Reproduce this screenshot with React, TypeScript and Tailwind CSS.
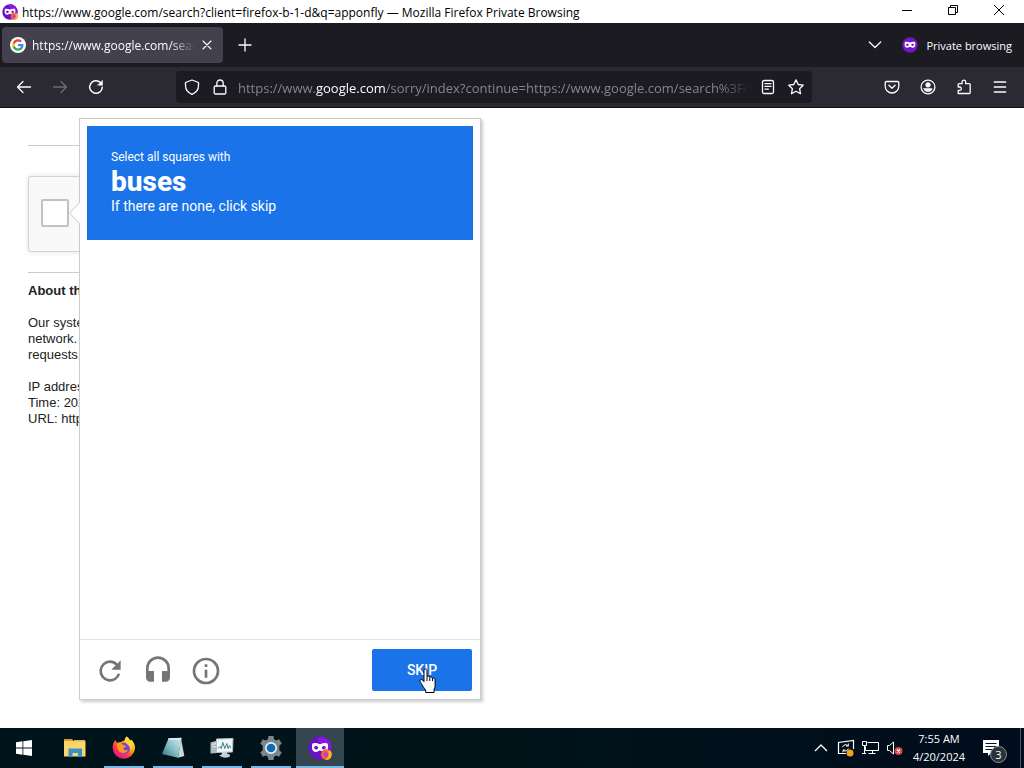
import React from "react";

const UI = "font-['Open_Sans','Noto_Sans',sans-serif]";

function MaskGlyph() {
  return (
    <g fill="#fff">
      <path
        d="M4 9.200c0-1.500.9-2.200 2.400-2.200 2 0 3.800.3 5.600 1.200C13.800 7.300 15.600 7 17.600 7c1.500 0 2.400.7 2.400 2.200v2.300c0 2.800-1.500 4.500-3.900 4.500-1.900 0-2.800-1.500-4.100-1.500S9.800 16 7.900 16C5.500 16 4 14.300 4 11.500zM6.200 11.500c0 1.300.8 2 1.900 2s2-.7 2-1.800-1-1.700-2.100-1.700-1.800.5-1.800 1.500zm7.700.2c0 1.100.9 1.800 2 1.800s1.900-.7 1.900-2c0-1-.7-1.500-1.800-1.500s-2.100.6-2.100 1.700z"
        fillRule="evenodd"
      />
    </g>
  );
}

function PrivateBadge({ className, fox }: { className: string; fox?: boolean }) {
  return (
    <svg viewBox="0 0 24 24" className={className} aria-hidden="true">
      <circle cx="12" cy="12" r="11.500" fill={fox ? "#6a10c8" : "#7316c4"} />
      {fox && <path d="M12 .5a11.500 11.500 0 0 1 11.500 11.500l-5 4L9 3z" fill="#8a17e0" />}
      <MaskGlyph />
      {fox && (
        <g>
          <circle cx="18.300" cy="18.500" r="5.300" fill="#ff5a36" />
          <path d="M18.300 13.200c1.700.6 1.500 1.700 3 2.100.4-.6.300-1.200.100-1.700 2.600 2.200 3.100 6.200 1 8.600-1.500 1.500-3.500 2-5.500 1.400 4-1.500 5.500-6 1.400-10.400z" fill="#ffb52e" />
          <circle cx="18" cy="18.700" r="2.200" fill="#a546dc" />
        </g>
      )}
    </svg>
  );
}

function GoogleIcon() {
  return (
    <svg viewBox="0 0 24 24" className="size-4 shrink-0" aria-hidden="true">
      <circle cx="12" cy="12" r="12" fill="#fff" />
      <g transform="translate(2.600 2.600) scale(.78)">
        <path fill="#4285F4" d="M22.560 12.250c0-.78-.07-1.530-.2-2.250H12v4.260h5.920a5.060 5.060 0 0 1-2.200 3.320v2.770h3.570c2.080-1.920 3.270-4.740 3.270-8.100z" />
        <path fill="#34A853" d="M12 23c2.970 0 5.460-.98 7.280-2.660l-3.570-2.770c-.98.66-2.230 1.060-3.710 1.060-2.860 0-5.290-1.930-6.160-4.530H2.180v2.840A11 11 0 0 0 12 23z" />
        <path fill="#FBBC05" d="M5.840 14.090a6.600 6.600 0 0 1 0-4.180V7.070H2.180a11 11 0 0 0 0 9.860l3.660-2.840z" />
        <path fill="#EA4335" d="M12 5.380c1.620 0 3.060.56 4.210 1.640l3.150-3.150A11 11 0 0 0 2.180 7.070l3.660 2.840C6.710 7.310 9.140 5.380 12 5.380z" />
      </g>
    </svg>
  );
}

type IconProps = { children: React.ReactNode; className?: string };

function Line({ children, className = "size-4" }: IconProps) {
  return (
    <svg
      viewBox="0 0 16 16"
      className={className}
      fill="none"
      stroke="currentColor"
      strokeWidth="1.300"
      strokeLinecap="round"
      strokeLinejoin="round"
      aria-hidden="true"
    >
      {children}
    </svg>
  );
}

function BarButton({ label, children, className = "" }: { label: string; children: React.ReactNode; className?: string }) {
  return (
    <button type="button" aria-label={label} className={`flex shrink-0 items-center justify-center ${className}`}>
      {children}
    </button>
  );
}

function TitleBar() {
  return (
    <header className="flex h-[23px] shrink-0 items-center bg-white text-black">
      <PrivateBadge className="ml-0.5 size-4 shrink-0" fox />
      <h1 className="ml-1 grow truncate pt-0.5 text-[12px] leading-4">
        https://www.google.com/search?client=firefox-b-1-d&amp;q=apponfly — Mozilla Firefox Private Browsing
      </h1>
      <div className="flex shrink-0 pb-1 pr-0.5">
        <BarButton label="Minimize" className="w-[46px]">
          <svg viewBox="0 0 12 12" className="size-3" stroke="#000" aria-hidden="true"><path d="M1 6.500h10" /></svg>
        </BarButton>
        <BarButton label="Restore" className="w-[46px]">
          <svg viewBox="0 0 12 12" className="size-3" fill="none" stroke="#000" aria-hidden="true"><path d="M1.500 3.500h7v7h-7zM3.500 3.500v-2h7v7h-2" /></svg>
        </BarButton>
        <BarButton label="Close" className="w-[46px]">
          <svg viewBox="0 0 12 12" className="size-3" stroke="#000" aria-hidden="true"><path d="M1 1l10 10M11 1L1 11" /></svg>
        </BarButton>
      </div>
    </header>
  );
}

function TabStrip() {
  return (
    <div className="flex h-11 shrink-0 items-center bg-[#1c1b22] pl-0.5 text-[#fbfbfe]">
      <div className="flex h-9 w-[221px] shrink-0 items-center rounded bg-[#42414d] pl-2 pr-2">
        <GoogleIcon />
        <span className="ml-1.5 mr-1 w-0 grow overflow-hidden whitespace-nowrap pt-0.5 text-[12px] leading-4 [mask-image:linear-gradient(to_right,#000_85%,transparent)]">
          https://www.google.com/search?client=firefox-b-1-d
        </span>
        <BarButton label="Close tab" className="size-4">
          <Line><path d="M4 4l8 8M12 4l-8 8" strokeWidth="1.100" /></Line>
        </BarButton>
      </div>
      <BarButton label="New tab" className="ml-3.5 size-4">
        <Line><path d="M2 8h12M8 2v12" /></Line>
      </BarButton>
      <div className="grow" />
      <BarButton label="List all tabs" className="size-4">
        <Line><path d="M2.300 5L8 10.500 13.700 5" /></Line>
      </BarButton>
      <PrivateBadge className="ml-[19px] size-4 shrink-0" />
      <span className="ml-2 mr-3 whitespace-nowrap pt-0.5 text-[11px] leading-4">Private browsing</span>
    </div>
  );
}

function NavBar() {
  return (
    <div className="flex h-[41px] shrink-0 items-center border-b border-[#0f0e14] bg-[#2b2a33] pl-4 pr-4 text-[#fbfbfe]">
      <div className="flex gap-5">
        <BarButton label="Back"><Line><path d="M14.500 8H1.500M7 2.500L1.500 8 7 13.500" /></Line></BarButton>
        <BarButton label="Forward" className="text-[#6d6c75]"><Line><path d="M1.500 8h13M9 2.500L14.500 8 9 13.500" /></Line></BarButton>
        <BarButton label="Reload">
          <Line><path d="M14.300 8.300A6.300 6.300 0 1 1 12.400 3.500" strokeWidth="1.500" /><path d="M14.500 1.500v4.700H9.800z" fill="currentColor" strokeWidth=".5" /></Line>
        </BarButton>
      </div>
      <div className="ml-[72px] flex h-8 w-0 max-w-[636px] grow items-center rounded bg-[#1c1b22] px-2">
        <BarButton label="Tracking protection"><Line><path d="M8 1L14.500 3.500v3.300c0 4-2.800 7-6.500 8.500C4.300 13.800 1.500 10.800 1.500 6.800V3.500z" /></Line></BarButton>
        <BarButton label="Site security" className="ml-3"><Line><rect x="2.200" y="7" width="11.600" height="8" rx="1.300" /><path d="M4.800 7V4.200a3.200 3.200 0 0 1 6.400 0V7" /></Line></BarButton>
        <div
          role="textbox"
          aria-label="Address"
          className="ml-2.5 mr-2.5 w-0 grow overflow-hidden whitespace-nowrap pt-0.5 text-[13px] leading-5 text-[#85848c] [mask-image:linear-gradient(to_right,#000_94%,transparent)]"
        >
          https://www.<span className="text-[#fbfbfe]">google.com</span>/sorry/index?continue=https://www.google.com/search%3Fclient
        </div>
        <BarButton label="Reader view"><Line><rect x="2.500" y="1.500" width="11" height="13" rx="1.500" /><path d="M5 4.700h6M5 7.400h6M5 10.100h3.500" /></Line></BarButton>
        <BarButton label="Bookmark" className="ml-3"><Line><path d="M8 .9l2.200 4.600 5 .7-3.600 3.500.9 5L8 12.300l-4.500 2.400.9-5L.8 6.200l5-.7z" /></Line></BarButton>
      </div>
      <div className="ml-auto flex gap-5">
        <BarButton label="Pocket"><Line><path d="M2.300 2.500h11.400c.7 0 1.100.5 1.100 1.100v3.600a6.800 6.800 0 0 1-13.600 0V3.600c0-.6.400-1.100 1.100-1.100z" /><path d="M4.900 6.300L8 9.200l3.100-2.900" /></Line></BarButton>
        <BarButton label="Account"><Line><circle cx="8" cy="8" r="6.900" /><circle cx="8" cy="5.900" r="2.400" fill="currentColor" strokeWidth=".5" /><path d="M3.900 9.500h8.200c0 2-2 3.300-4.100 3.300s-4.100-1.300-4.100-3.300z" fill="currentColor" strokeWidth=".5" /></Line></BarButton>
        <BarButton label="Extensions"><Line><path d="M2.200 14.500V11.300h1.500a1.650 1.650 0 0 0 0-3.300H2.200V5.600c0-.5.400-.9.900-.9h3V3a1.800 1.800 0 0 1 3.600 0v1.700h3.600c.5 0 .9.400.9.900v8c0 .5-.4.900-.9.900z" /></Line></BarButton>
        <BarButton label="Application menu"><Line><path d="M2.300 3h11.400M2.300 8h11.400M2.300 13h11.400" /></Line></BarButton>
      </div>
    </div>
  );
}

function SorryPage() {
  return (
    <div className="w-[428px] pl-7 pt-[37px] font-['Liberation_Sans',Arial,sans-serif] text-[13px] leading-4 text-[#222]">
      <hr className="border-[#ccc]" />
      <div className="mt-[30px] flex h-[76px] w-[304px] items-center rounded-[3px] border border-[#d3d3d3] bg-[#f9f9f9] pb-0.5 pl-3 shadow-[0_0_4px_1px_rgba(0,0,0,0.08)]">
        <input
          type="checkbox"
          aria-label="I'm not a robot"
          className="size-7 appearance-none rounded-xs border-2 border-[#c1c1c1] bg-white"
        />
      </div>
      <hr className="mt-5 border-[#ccc]" />
      <h2 className="mt-2.5 font-bold">About this page</h2>
      <p className="mt-4">
        Our systems have detected unusual traffic from your computer
        <br />
        network. This page checks to see if it's really you sending the
        <br />
        requests, and not a robot.
      </p>
      <p className="mt-4">
        IP address: 10.0.0.1
        <br />
        Time: 2024-04-20T07:55:00Z
        <br />
        URL: https://www.google.com/search
      </p>
    </div>
  );
}

function Challenge() {
  return (
    <section
      aria-label="Image challenge"
      className="absolute bottom-7 left-[79px] top-2.5 flex w-[402px] flex-col border border-[#ccc] bg-white font-[Roboto,sans-serif] shadow-[2px_2px_3px_rgba(0,0,0,0.2)]"
    >
      <svg viewBox="0 0 11 22" className="absolute -left-[11px] top-[83px] h-[22px] w-[11px]" aria-hidden="true">
        <path d="M11 0L.7 11 11 22" fill="#fff" stroke="#ccc" />
      </svg>
      <div className="m-[7px] mb-0 h-[114px] bg-[#1a73e8] px-6 pt-[23px] text-white">
        <div className="text-[12px] leading-4">Select all squares with</div>
        <strong className="block text-[28px] font-extrabold leading-[33px]">buses</strong>
        <div className="text-[14px] leading-4">If there are none, click skip</div>
      </div>
      <div className="grow" />
      <footer className="flex h-[60px] items-center justify-between border-t border-[#dfdfdf] pl-3.5 pr-2">
        <div className="flex gap-4 pt-0.5 text-[#757575]">
          <BarButton label="Get a new challenge">
            <svg viewBox="0 0 24 24" className="size-8" fill="currentColor" aria-hidden="true"><path d="M17.650 6.350A7.958 7.958 0 0 0 12 4a8 8 0 1 0 7.730 10h-2.080A5.990 5.990 0 0 1 12 18a6 6 0 1 1 0-12c1.660 0 3.140.69 4.220 1.780L13 11h7V4z" /></svg>
          </BarButton>
          <BarButton label="Get an audio challenge">
            <svg viewBox="0 0 24 24" className="size-8" fill="currentColor" aria-hidden="true"><path d="M12 1a9 9 0 0 0-9 9v7c0 1.660 1.340 3 3 3h3v-8H5v-2a7 7 0 0 1 14 0v2h-4v8h3c1.660 0 3-1.340 3-3v-7a9 9 0 0 0-9-9z" /></svg>
          </BarButton>
          <BarButton label="Help">
            <svg viewBox="0 0 24 24" className="size-8" fill="currentColor" aria-hidden="true"><path d="M11 17h2v-6h-2zm1-15a10 10 0 1 0 0 20 10 10 0 0 0 0-20zm0 18a8 8 0 1 1 0-16 8 8 0 0 1 0 16zM11 9h2V7h-2z" /></svg>
          </BarButton>
        </div>
        <button type="button" className="relative h-[42px] w-[100px] rounded-xs bg-[#1a73e8] pt-0.5 text-[14px] font-medium text-white">
          SKIP
          <svg viewBox="0 0 18 26" className="absolute left-[47px] top-[19px] h-[26px] w-[18px]" aria-hidden="true">
            <path
              d="M5 2.500c0-2 3-2 3 0v6.300c.5-1 2.600-.8 2.800.6.600-.8 2.600-.5 2.700.9.700-.6 2.600-.2 2.600 1.600v5.600c0 1.500-.4 2.500-1 3.600v3.400H6.700v-2.500C5.300 20.500 3.800 18.200 2.300 15.500c-.8-1.400-1.400-2.200-1.300-3 .2-1.200 1.800-1.300 2.700-.3L5 13.700z"
              fill="#fff"
              stroke="#000"
            />
            <path d="M8 9v4M10.800 9.500V13M13.500 10.500V13" stroke="#000" />
          </svg>
        </button>
      </footer>
    </section>
  );
}

function TaskButton({ label, children, open, active }: { label: string; children: React.ReactNode; open?: boolean; active?: boolean }) {
  return (
    <button
      type="button"
      aria-label={label}
      className={`relative flex h-10 w-12 items-center justify-center ${active ? "bg-[#34474e]" : ""}`}
    >
      {children}
      {open && <span className={`absolute bottom-0 h-0.5 bg-[#76b9ed] ${active ? "inset-x-0" : "inset-x-1"}`} />}
    </button>
  );
}

function Taskbar() {
  return (
    <nav aria-label="Taskbar" className="flex h-10 shrink-0 items-center bg-linear-to-r from-[#00141b] via-[#001319] to-[#010c1c] text-white">
      <TaskButton label="Start">
        <svg viewBox="0 0 16 16" className="size-4" fill="#fff" aria-hidden="true"><path d="M0 2.200l6.500-.9v6.300H0zM7.300 1.200L16 0v7.600H7.300zM0 8.400h6.500v6.300L0 13.800zM7.300 8.400H16V16l-8.700-1.200z" /></svg>
      </TaskButton>
      <div className="ml-[3px] flex gap-px">
        <TaskButton label="File Explorer">
          <svg viewBox="0 0 24 24" className="size-6" aria-hidden="true">
            <path d="M1 3h8l2 2.500H1z" fill="#e09a2c" />
            <path d="M1 5h21.500v15.500H1z" fill="#fbd66b" />
            <path d="M11 4h11v1.500H11z" fill="#e8b44a" />
            <path d="M5.500 12.500h13.500V21h-4v-4H9.500v4h-4z" fill="#3a91c9" />
          </svg>
        </TaskButton>
        <TaskButton label="Firefox" open>
          <svg viewBox="0 0 24 24" className="size-6" aria-hidden="true">
            <defs>
              <linearGradient id="flame" x1=".8" y1=".1" x2=".2" y2=".9">
                <stop offset="0" stopColor="#fff14a" /><stop offset=".4" stopColor="#ff980e" /><stop offset=".7" stopColor="#ff3647" /><stop offset="1" stopColor="#e31587" />
              </linearGradient>
            </defs>
            <path d="M3.500 4c.2 1.200.6 2 1.500 2.700 1-.5 2-.6 3-.4L12.500 4.500 14.500.5c2 1 3 2.500 3.500 4.200l1-1.200c2.600 2.200 4.200 5.200 4 9a11.200 11.200 0 0 1-22.300.3C.5 9 1.200 6 3.500 4z" fill="url(#flame)" />
            <circle cx="12.300" cy="12.300" r="5.700" fill="#7543d9" />
            <path d="M5 8c2.500-1.500 5-.7 6.500 1.300l3 .4c-.5 1.600-3 1.700-3 3 0 1.500 2.500 2.300 4.500 1-1.200 4-6.500 4-9 1.500C5.200 13.300 4.600 10.500 5 8z" fill="#ff9621" />
            <path d="M14.500.5c-3.500 3.500-1 6.500 1 8 2 1.600 3 3.500 2.500 6.500 3-3 2.600-7.500 0-10.300z" fill="#ffd338" />
          </svg>
        </TaskButton>
        <TaskButton label="Notepad" open>
          <svg viewBox="0 0 24 24" className="size-6" aria-hidden="true">
            <defs>
              <linearGradient id="paper" x1="1" y1="0" x2="0" y2="1">
                <stop offset="0" stopColor="#d3edf0" /><stop offset=".55" stopColor="#7fb9c1" /><stop offset="1" stopColor="#2d6d79" />
              </linearGradient>
            </defs>
            <path d="M20 2.500L23.300 20 17 21.700z" fill="#cbd8d9" />
            <path d="M7.500 2.500L20.500 2 17 21.700 1 18z" fill="url(#paper)" />
            <path d="M7.500 2.200L20.500 1.700l-.3 1.500-13.200.5z" fill="#e9f4f4" />
          </svg>
        </TaskButton>
        <TaskButton label="Server monitor" open>
          <svg viewBox="0 0 24 24" className="size-6" aria-hidden="true">
            <path d="M.5 6.500L7 4.500V17l-6.500.5z" fill="#aebabe" />
            <path d="M2 8.500l4-1M2 11l4-.5" stroke="#e6edee" />
            <path d="M6.500 3L23 2.500 22.500 16 6.500 16.500z" fill="#f0f5f5" stroke="#b4bfc3" />
            <path d="M8 12.500l2-2 1.300 2 1.500-6 2 6 2-5 1.300 5 1.200-3 1.700 2.500" fill="none" stroke="#39849b" />
            <path d="M12 16.300h5v2l2 1.200-4 2-6-1.700 3-1.500z" fill="#d8dfe0" />
            <ellipse cx="15.500" cy="19.500" rx="4.500" ry="2" fill="#c5ced0" />
          </svg>
        </TaskButton>
        <TaskButton label="Settings" open>
          <svg viewBox="0 0 24 24" className="size-6" aria-hidden="true">
            <path d="M9.500 0h5l.6 3.200 2.100 1.200 3-1.100 2.500 4.300-2.400 2.100v4.600l2.400 2.100-2.500 4.300-3-1.100-2.100 1.200-.6 3.200h-5l-.6-3.200-2.100-1.200-3 1.100-2.500-4.300 2.400-2.100V9.700L1.300 7.600l2.500-4.300 3 1.100 2.100-1.200z" fill="#7c858c" />
            <circle cx="12" cy="12" r="5.200" fill="#116bbb" stroke="#e9eef0" strokeWidth="1.700" />
          </svg>
        </TaskButton>
        <TaskButton label="Firefox Private Browsing" open active>
          <PrivateBadge className="size-6" fox />
        </TaskButton>
      </div>
      <div className="ml-auto flex items-center">
        <BarButton label="Show hidden icons"><Line className="size-4"><path d="M2 11l6-6 6 6" strokeLinecap="butt" /></Line></BarButton>
        <BarButton label="Updates" className="ml-2">
          <svg viewBox="0 0 18 18" className="size-[18px]" fill="none" stroke="#fff" aria-hidden="true">
            <path d="M16.500 10V1.500L1.500 3.500v11H9" strokeWidth="1.200" />
            <path d="M5.500 8.200A3.300 3.300 0 0 1 11.300 7V4.500M11.300 7H9M11.300 9.500A3.300 3.300 0 0 1 6 11.300v2M6 11h2.300" />
            <circle cx="13" cy="14" r="3.500" fill="#f5a11b" stroke="none" />
          </svg>
        </BarButton>
        <BarButton label="Network" className="ml-[7px]">
          <svg viewBox="0 0 17 16" className="h-4 w-[17px]" fill="none" stroke="#fff" aria-hidden="true"><path d="M5.500 2.500h11v8H3.500V6.500M.5 1.500h4v4h-4zM2.500 5.500v8M10.500 10.500v3M6.500 13.500h7M0 13.500h4" /></svg>
        </BarButton>
        <BarButton label="Volume muted" className="ml-[7px]">
          <svg viewBox="0 0 17 16" className="h-4 w-[17px]" fill="none" aria-hidden="true">
            <path d="M1.500 5.500h2l4-3.500v12l-4-3.500h-2z" stroke="#fff" />
            <circle cx="12.500" cy="11" r="4" fill="#d9434a" /><path d="M11 9.500l3 3M14 9.500l-3 3" stroke="#fff" strokeWidth="1.200" />
          </svg>
        </BarButton>
        <div className="w-[72px] text-center text-[11px] leading-[18px]">
          <div>7:55 AM</div>
          <div>4/20/2024</div>
        </div>
        <button type="button" aria-label="Notifications" className="relative ml-px flex h-10 w-11 items-center pl-[7px]">
          <svg viewBox="0 0 16 16" className="size-4" aria-hidden="true"><path d="M0 0h16v13H8l-3 3v-3H0z" fill="#fff" /><path d="M2.500 3.500h11M2.500 6.500h11M2.500 9.500h7" stroke="#06151f" /></svg>
          <span className="absolute left-3.5 top-[18px] flex size-[17px] items-center justify-center rounded-full border border-[#8b9299] bg-[#28323a] text-[11px] leading-none">3</span>
        </button>
        <div className="h-10 w-1 border-l border-[#4c5661]" />
      </div>
    </nav>
  );
}

export default function App() {
  return (
    <div className={`flex h-screen flex-col overflow-hidden bg-white ${UI}`}>
      <TitleBar />
      <TabStrip />
      <NavBar />
      <main className="relative grow overflow-hidden bg-white">
        <SorryPage />
        <Challenge />
      </main>
      <Taskbar />
    </div>
  );
}
